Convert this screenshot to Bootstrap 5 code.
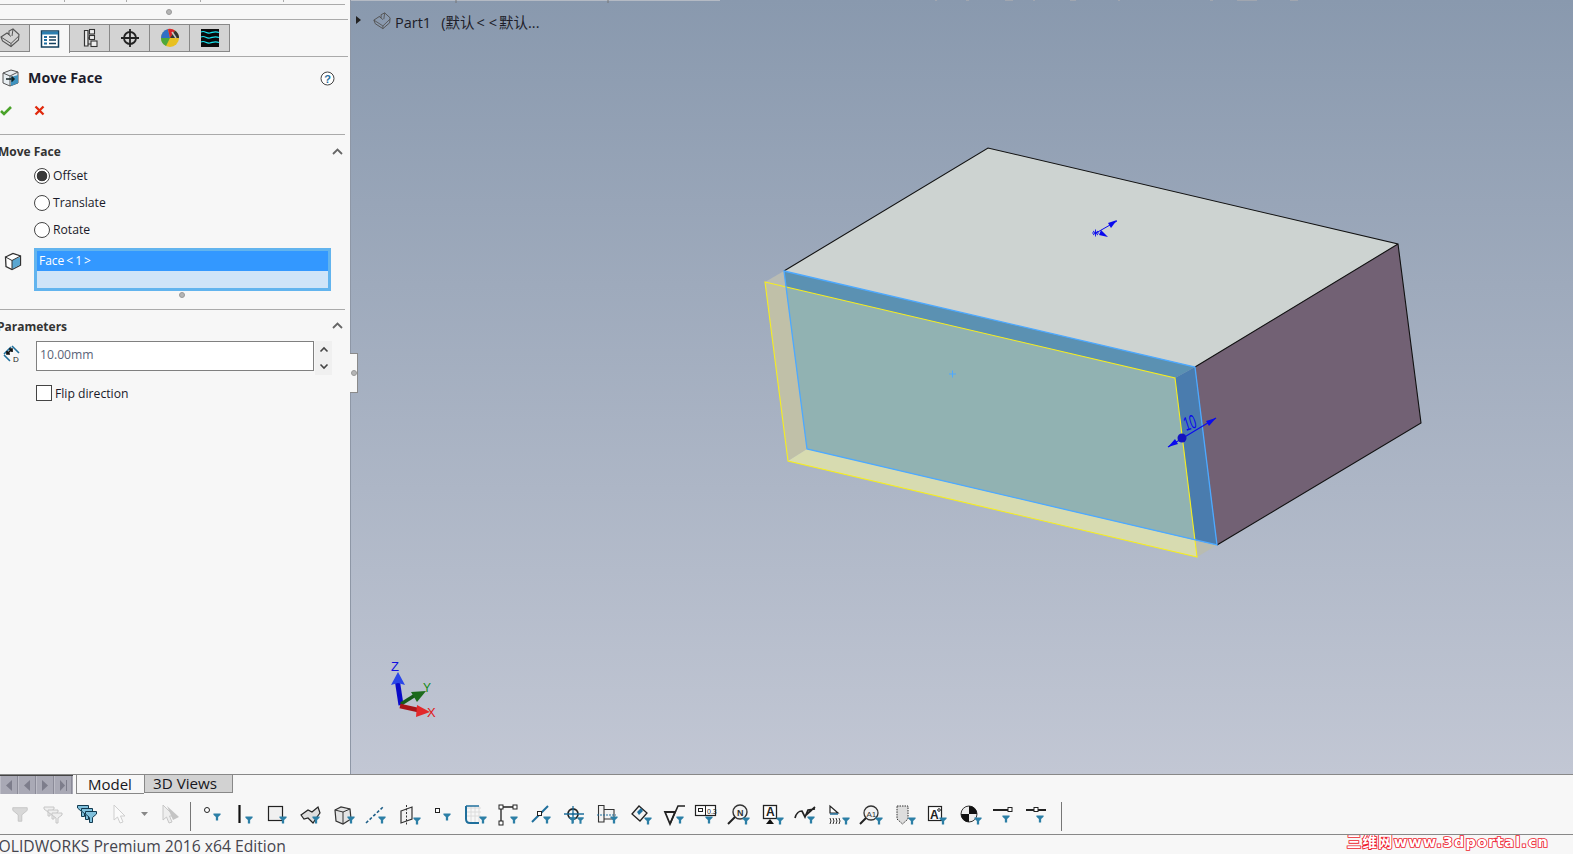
<!DOCTYPE html>
<html lang="en">
<head>
<meta charset="utf-8">
<title>SOLIDWORKS Move Face</title>
<link href="https://cdn.jsdelivr.net/npm/bootstrap@5.3.0/dist/css/bootstrap.min.css" rel="stylesheet">
<style>
html,body{height:854px;overflow:hidden}
body{font-family:"Open Sans","Noto Sans","Noto Sans CJK SC",sans-serif;color:#1a1a2a;background:#f7f7f7;font-size:12px}
.sw-main{height:774px}
.sw-panel{width:351px;flex:none;background:#f7f7f7;overflow:hidden;border-right:1px solid #8e97a6}
.sw-ticks{height:2px;margin-bottom:2px;background:linear-gradient(90deg,#f7f7f7 64px,#aaa 64px,#aaa 65px,#f7f7f7 65px,#f7f7f7 126px,#aaa 126px,#aaa 127px,#f7f7f7 127px,#f7f7f7 200px,#aaa 200px,#aaa 201px,#f7f7f7 201px,#f7f7f7 283px,#aaa 283px,#aaa 284px,#f7f7f7 284px)}
.sw-rule{height:1px;background:#aaa;width:345px;flex:none}
.sw-rule-wide{width:348px}
.sw-rule-low{margin-top:10px}
.sw-grip{width:6px;height:6px;border-radius:50%;background:#b5b5b5;border:1px solid #999;display:block}
.sw-griprow{height:14px;width:337px}
.sw-griprow-low{height:8px;width:364px}
.sw-tabs{height:36px;padding-top:4px}
.sw-tab{width:40px;height:28px;background:#d3d3d3;border:1px solid #888;border-left:0;display:flex;align-items:center;justify-content:center;padding:0}
.sw-tab-first{width:30px;justify-content:flex-start}
.sw-tab-on{background:#f7f7f7;height:29px;border-bottom:0}
.sw-title{font-size:14.2px;font-weight:700;color:#1c1c2c;height:42px;padding:0 15px 0 2px}
.sw-acts{height:35px;padding-bottom:12px}
.sw-x{margin-left:21px}
.sw-sect{font-size:12px;font-weight:700;color:#333;padding:2px 7px 0 0;margin-left:-1px;height:32px;overflow:hidden}
.sw-sect-params{height:31px;padding-top:2px}
.sw-chev{margin-top:-2px}
.sw-clip1{margin-left:-1px}
.sw-clip2{margin-left:-2px}
.sw-opt{height:27px;margin:0;padding:0 0 0 34px;min-height:0;display:flex;align-items:center}
.sw-opt-first{margin-top:-5px}
.sw-opt-last{margin-bottom:1px}
.sw-opt-flip{padding-left:36px;margin-top:10px;height:16px}
.sw-opt .form-check-input{float:none;margin:0;width:16px;height:16px;flex:none;background:#fff;border:1px solid #444;box-shadow:none;opacity:1}
.sw-opt .form-check-input[type=checkbox]{border-radius:0}
.sw-opt .form-check-input:checked{background:radial-gradient(circle,#3a3a3a 5px,#fff 5.6px);border-color:#444}
.sw-opt .form-check-label{padding:2px 0 0 3px;font-size:12.2px;opacity:1}
.sw-facerow{height:43px;margin-top:4px;padding-left:4px}
.sw-sel{height:43px;width:297px;margin-left:12px;border:3px solid #62b4ee;background:#cfe4f8;border-radius:0}
.sw-sel .list-group-item{background:#3398ff;color:#fff;border:0;border-radius:0;padding:0 2px;height:20px;font-size:12px;line-height:19px}
.sw-param{height:34px;padding-left:3px}
.sw-dimico{margin-top:4px;flex:none}
.sw-input{width:278px;height:30px;margin-left:15px;font-size:12.2px;padding:0 3px 3px;color:#5b6478;border:1px solid #808080;border-radius:0;background:#fff;box-shadow:none}
.sw-spin{width:17px;height:34px;background:#f0f0f0;margin-left:1px;flex:none}
.sw-handle{position:absolute;left:350px;top:353px;width:8px;height:40px;background:#f7f7f7;border:1px solid #8a8a8a;border-left:0;z-index:3;display:flex;align-items:center;justify-content:center}
.sw-view{flex:1;position:relative;background:linear-gradient(180deg,#8999ae 0%,#c2c7d4 100%);overflow:hidden}
.sw-view-svg{position:absolute;inset:0;width:100%;height:100%}
.sw-crumb{position:absolute;left:22px;top:12px;font-size:14.5px;color:#1d1d28;line-height:20px;white-space:nowrap}
.sw-crumb-ico{margin-right:4px;margin-bottom:4px}
.sw-crumb-tail{margin-left:10px;word-spacing:1px}
.sw-lt{margin:0 2px}
.sw-tabbar{height:20px;border-top:1px solid #888;background:#f7f7f7}
.sw-nav{width:73px;height:19px;background:#a9a9b5;border-top:1px solid #444;margin-right:3px;flex:none}
.sw-navb{width:18px;height:18px;display:flex;align-items:center;justify-content:center;border-right:1px solid #8b8b98;border-left:1px solid #bcbcc6}
.sw-mtab{font-size:15px;line-height:18px;color:#161620;padding:0 0 0 11px;width:68px;height:19px;background:#f7f7f7;border:1px solid #888;border-top:0;border-right:0}
.sw-vtab{font-size:15.2px;line-height:17px;color:#161620;width:89px;height:18px;background:#d2d2d2;border:1px solid #888;border-top:0;padding-left:8px}
.sw-tools{height:41px;border-bottom:1px solid #888;background:#f7f7f7;padding:4px 0 0 3px}
.sw-tb{width:33px;height:26px;flex:none;display:block}
.sw-tbc{width:19px;height:26px;flex:none;display:block}
.sw-sep{width:1px;height:29px;background:#777;margin:0 4px 0 3px;flex:none}
.sw-sep-end{margin-left:8px}
.sw-status{height:19px;background:#f7f7f7;font-size:15.7px;line-height:19px;color:#45454e;white-space:nowrap;overflow:hidden}
.sw-statext{margin-left:-10px;padding-top:2px}
.sw-mark{margin-right:24px;font-family:"DejaVu Sans","Noto Sans CJK SC",sans-serif;font-weight:700;font-size:14.5px;line-height:15px;color:#fff;-webkit-text-stroke:1.7px #ee1b2d;paint-order:stroke fill;letter-spacing:1.100px}
</style>
</head>
<body class="d-flex flex-column m-0">
<svg width="0" height="0" class="position-absolute">
<defs>
<symbol id="fn" viewBox="-2 -1 14 12"><path d="M0 0H10V2L6.600 5V10H3.400V5L0 2Z" fill="#2c7fa6"/></symbol>
<symbol id="gf" viewBox="0 0 20 20"><path d="M2 3H18V6L12 11V18H8V11L2 6Z" fill="#d8d8d8" stroke="#c4c4c4"/></symbol>
<symbol id="bf" viewBox="0 0 12 12"><path d="M.5.5H11.500V3L7.500 6.500V11.500H4.500V6.500L.5 3Z" fill="#7fc0dc" stroke="#123a50"/></symbol>
<symbol id="part" viewBox="0 0 20 20"><path d="M1 9 7 5l2 1.500V3L13 1l6 5.500-.500 5.500L11 18.500 2.500 13Z" fill="none" stroke="#555" stroke-width="1.100"/><path d="M1 9 11 15.500 18.800 8M11 15.500V18.500M7 5l4 3.500M13 1l-1 7" fill="none" stroke="#555"/></symbol>
</defs>
</svg>

<div class="d-flex sw-main">
  <aside class="sw-panel d-flex flex-column flex-shrink-0">
    <div class="sw-ticks"></div>
    <div class="sw-rule"></div>
    <div class="sw-griprow d-flex justify-content-center align-items-center"><span class="sw-grip"></span></div>
    <div class="sw-rule sw-rule-wide"></div>

    <div class="sw-tabs d-flex">
      <button class="sw-tab sw-tab-first" type="button" aria-label="Feature tree"><svg width="20" height="20"><use href="#part" width="20" height="20"/></svg></button>
      <button class="sw-tab sw-tab-on" type="button" aria-label="Property manager"><svg width="20" height="20" viewBox="0 0 20 20"><rect x="1.500" y="2" width="17" height="16" fill="#fff" stroke="#123f5e" stroke-width="1.500"/><rect x="2" y="2.500" width="16" height="3" fill="#2a7eb0"/><path d="M4 8h3M4 11h3M4 14.500h3" stroke="#1d6ea2" stroke-width="2"/><path d="M9 8h7M9 11h7M9 14.500h7" stroke="#123f5e" stroke-width="1.500"/></svg></button>
      <button class="sw-tab" type="button" aria-label="Configuration manager"><svg width="20" height="20" viewBox="0 0 20 20"><path d="M4.500 2.500H8V18H4.500Z" fill="#eee" stroke="#333" stroke-width="1.200"/><path d="M8 10H11M8 16H11" stroke="#333"/><rect x="9.500" y="1.500" width="5" height="4.500" fill="#eee" stroke="#333" stroke-width="1.100"/><rect x="9.500" y="7.500" width="5" height="4" fill="#eee" stroke="#333" stroke-width="1.100"/><rect x="11" y="13" width="6" height="5.500" fill="#eee" stroke="#333" stroke-width="1.100"/></svg></button>
      <button class="sw-tab" type="button" aria-label="DimXpert"><svg width="20" height="20" viewBox="0 0 20 20"><circle cx="10" cy="10" r="6" fill="none" stroke="#222" stroke-width="1.800"/><path d="M10 1V19M1 10H19" stroke="#222" stroke-width="1.800"/></svg></button>
      <button class="sw-tab" type="button" aria-label="Display manager"><svg width="20" height="20" viewBox="0 0 20 20"><circle cx="10" cy="10" r="9" fill="#e8c020"/><path d="M10 10 1 10A9 9 0 0 1 8 1Z" fill="#2f6fc6"/><path d="M10 10 8 1A9 9 0 0 1 15 2.500Z" fill="#d8242c"/><path d="M10 10 15 2.500A9 9 0 0 1 19 10Z" fill="#333"/><path d="M10 10 1 10A9 9 0 0 0 6 18Z" fill="#4ea83a"/><path d="M12 4l4 6" stroke="#c9c9c9" stroke-width="1.500"/></svg></button>
      <button class="sw-tab" type="button" aria-label="Motion manager"><svg width="20" height="20" viewBox="0 0 20 20"><rect x="1" y="1" width="18" height="18" fill="#0b0b0b"/><path d="M1 4c4-2 5 2 9 1s5-2 9-.5M1 9c4-2 5 2 9 1s5-2 9-.5M1 14c4-2 5 2 9 1s5-2 9-.5" fill="none" stroke="#19e5f0" stroke-width="1.100"/></svg></button>
    </div>
    <div class="sw-rule sw-rule-wide"></div>

    <div class="sw-title d-flex align-items-center justify-content-between">
      <div class="d-flex align-items-center gap-2">
        <svg width="18" height="18" viewBox="0 0 18 18"><path d="M1 4 9 1l7 2v11l-8 3-7-3Z" fill="#e8eef2" stroke="#555"/><path d="M1 4l7 3 8-4M8 7v10" fill="none" stroke="#555"/><path d="M9 8l7-2v8l-7 3Z" fill="#3f93c0"/><path d="M4 10h8M9.500 7.500 12 10l-2.500 2.500" fill="none" stroke="#122" stroke-width="1.500"/></svg>
        <span>Move Face</span>
      </div>
      <svg width="15" height="15" viewBox="0 0 15 15"><circle cx="7.500" cy="7.500" r="6.500" fill="#fff" stroke="#444"/><text x="7.500" y="11.500" text-anchor="middle" font-family="Liberation Sans" font-size="11" font-weight="700" fill="#2a6f9e">?</text></svg>
    </div>
    <div class="sw-acts d-flex align-items-center">
      <svg width="13" height="12" viewBox="0 0 13 12" class="flex-shrink-0"><path d="M1 6l3 3 7-7" fill="none" stroke="#4aa32a" stroke-width="2.600"/></svg>
      <svg width="11" height="11" viewBox="0 0 11 11" class="sw-x"><path d="M1.500 1.500l8 8M9.500 1.500l-8 8" stroke="#e0280c" stroke-width="2.300"/></svg>
    </div>
    <div class="sw-rule"></div>

    <div class="sw-sect d-flex align-items-center justify-content-between">
      <span class="sw-clip1">Move Face</span>
      <svg width="11" height="7" viewBox="0 0 11 7" class="sw-chev"><path d="M1 6 5.500 1.500 10 6" fill="none" stroke="#666" stroke-width="1.800"/></svg>
    </div>
    <div class="form-check sw-opt sw-opt-first"><input class="form-check-input" type="radio" name="mv" id="r1" checked><label class="form-check-label" for="r1">Offset</label></div>
    <div class="form-check sw-opt"><input class="form-check-input" type="radio" name="mv" id="r2"><label class="form-check-label" for="r2">Translate</label></div>
    <div class="form-check sw-opt sw-opt-last"><input class="form-check-input" type="radio" name="mv" id="r3"><label class="form-check-label" for="r3">Rotate</label></div>
    <div class="sw-facerow d-flex align-items-start">
      <svg width="18" height="20" viewBox="0 0 18 20" class="mt-1"><path d="M1.500 5 9 1.500 16.500 4V13L8 17.500 2 14.500Z" fill="#fff" stroke="#333" stroke-width="1.300"/><path d="M8 8.500 16 5V13L8 17Z" fill="#5aa7d2"/><path d="M1.500 5 8 8.500 16.500 4M8 8.500V17" fill="none" stroke="#333"/></svg>
      <div class="list-group sw-sel"><div class="list-group-item">Face&thinsp;&lt;&thinsp;1&thinsp;&gt;</div></div>
    </div>
    <div class="sw-griprow-low d-flex justify-content-center align-items-center"><span class="sw-grip"></span></div>
    <div class="sw-rule sw-rule-low"></div>
    <div class="sw-sect sw-sect-params d-flex align-items-center justify-content-between">
      <span class="sw-clip2">Parameters</span>
      <svg width="11" height="7" viewBox="0 0 11 7" class="sw-chev"><path d="M1 6 5.500 1.500 10 6" fill="none" stroke="#666" stroke-width="1.800"/></svg>
    </div>
    <div class="sw-param d-flex align-items-start">
      <svg width="18" height="18" viewBox="0 0 18 18" class="sw-dimico"><path d="M1 9 8 2M9 1l7 7M1 10l6 6" stroke="#1f6f9c" stroke-width="1.600" fill="none"/><path d="M4 9 9 4M4 6v3h3M6 4h3v3" stroke="#111" stroke-width="1.700" fill="none"/><text x="10" y="17" font-family="Liberation Sans" font-size="8" fill="#222">D</text></svg>
      <input class="form-control sw-input" type="text" value="10.00mm" aria-label="Offset distance">
      <div class="sw-spin d-flex flex-column align-items-center justify-content-around">
        <svg width="10" height="7" viewBox="0 0 10 7"><path d="M1.500 5.500 5 2l3.500 3.500" fill="none" stroke="#444" stroke-width="1.600"/></svg>
        <svg width="10" height="7" viewBox="0 0 10 7"><path d="M1.500 1.500 5 5l3.500-3.500" fill="none" stroke="#444" stroke-width="1.600"/></svg>
      </div>
    </div>
    <div class="form-check sw-opt sw-opt-flip"><input class="form-check-input" type="checkbox" id="c1"><label class="form-check-label" for="c1">Flip direction</label></div>
  </aside>
  <div class="sw-handle"><span class="sw-grip"></span></div>

  <main class="sw-view">
    <svg class="sw-view-svg" viewBox="351 0 1222 774" preserveAspectRatio="none">
      <path d="M351 .5H720" stroke="#b4bac4"/>
      <path d="M456 0V3M608 0V3" stroke="#777"/>
      <path d="M935 .5h2M966 .5h3M1005 .5h8M1033 .5h2M1070 .5h6M1118 .5h2M1210 .5h3M1237 .5h20M1290 .5h8" stroke="#a0a6b0"/>
      <!-- ghost offset face -->
      <polygon points="765,282 784,271 786,287" fill="#b9bcb4"/>
      <polygon points="765,282 786,287 807,449 788,461" fill="#c0c0a8"/>
      <polygon points="788,461 807,449 1195,540 1197,557" fill="#d7dbb0"/>
      <polygon points="1197,557 1195,540 1217,545" fill="#b9bcb0"/>
      <!-- solid -->
      <polygon points="988,148 1398,244 1195,367 784,271" fill="#cdd3d1"/>
      <polygon points="1195,367 1398,244 1421,423 1217,545" fill="#726174"/>
      <polygon points="786,287 1175,378 1195,540 807,449" fill="#91b2b2"/>
      <polygon points="784,271 1195,367 1175,378 786,287" fill="#5b91b2"/>
      <polygon points="1195,367 1217,545 1195,540 1175,378" fill="#4a7cae"/>
      <path d="M784 271 988 148 1398 244 1421 423 1217 545M1195 367 1398 244" fill="none" stroke="#111" stroke-width="1.100"/>
      <path d="M765 282 1175 378 1197 557 788 461Z" fill="none" stroke="#f6ee20" stroke-width="1.100"/>
      <path d="M784 271 1195 367 1217 545 807 449Z" fill="none" stroke="#4da9ff" stroke-width="1.300"/>
      <path d="M949 374h7M952.500 370.500v7" stroke="#4da9ff"/>
      <!-- handles -->
      <path d="M1096 233 1117 221" stroke="#0a0aee"/>
      <path d="M1117 220 1108 223 1111 228Z" fill="#0a0aee"/>
      <path d="M1108 237 1099 235 1101 230Z" fill="#0a0aee"/>
      <path d="M1092 233h7M1095.500 229.500v7M1093 231l5 4M1098 231l-5 4" stroke="#0a0aee" stroke-width=".9"/>
      <path d="M1168 447 1216 418" stroke="#0a0aee" stroke-width="1.100"/>
      <path d="M1216 418 1206 421 1209 426Z M1168 447 1178 444 1175 439Z" fill="#0a0aee"/>
      <circle cx="1182" cy="438" r="4.500" fill="#1414c0"/>
      <text transform="translate(1186 431) rotate(-18) scale(.85 1.500)" font-family="Liberation Sans" font-size="13" fill="#0a0aee">10</text>
      <!-- triad -->
      <path d="M401 705 397.500 682" stroke="#0a0ac8" stroke-width="5"/>
      <path d="M398 672 391 685 398 683 405 685Z" fill="#2a46e8"/>
      <path d="M401 704 417 694" stroke="#175c1a" stroke-width="3.500"/>
      <path d="M426 691 411 692 417 702Z" fill="#1c6b1c"/>
      <path d="M400 706 418 710" stroke="#a81418" stroke-width="4.500"/>
      <path d="M430 712 417 705 416 717Z" fill="#e2282a"/>
      <text x="391" y="671" font-family="Liberation Sans" font-size="13" fill="#1010e0">Z</text>
      <text x="423" y="692" font-family="Liberation Sans" font-size="12" fill="#138a13">Y</text>
      <text x="427" y="717" font-family="Liberation Sans" font-size="13" fill="#e01818">X</text>
      <!-- tree arrow -->
      <path d="M356 16 361 20 356 24Z" fill="#222"/>
    </svg>
    <div class="sw-crumb d-flex align-items-center">
      <svg width="18" height="18" class="sw-crumb-ico"><use href="#part" width="18" height="18"/></svg>
      <span>Part1<span class="sw-crumb-tail">(默认<span class="sw-lt">&lt;</span><span class="sw-lt">&lt;</span>默认...</span></span>
    </div>
  </main>
</div>

<div class="sw-tabbar d-flex flex-shrink-0">
  <div class="sw-nav d-flex">
    <span class="sw-navb"><svg width="8" height="11" viewBox="0 0 8 11"><path d="M7 0 1 5.500 7 11Z" fill="#7d7d8b"/></svg></span>
    <span class="sw-navb"><svg width="8" height="11" viewBox="0 0 8 11"><path d="M7 0 1 5.500 7 11Z" fill="#7d7d8b"/></svg></span>
    <span class="sw-navb"><svg width="8" height="11" viewBox="0 0 8 11"><path d="M1 0 7 5.500 1 11Z" fill="#7d7d8b"/></svg></span>
    <span class="sw-navb"><svg width="9" height="11" viewBox="0 0 9 11"><path d="M1 0 6 5.500 1 11Z" fill="#7d7d8b"/><path d="M7.500 0V11" stroke="#7d7d8b"/></svg></span>
  </div>
  <div class="sw-mtab">Model</div>
  <div class="sw-vtab">3D Views</div>
</div>

<div class="sw-tools d-flex align-items-center flex-shrink-0">
  <svg class="sw-tb" viewBox="0 0 33 26"><use href="#gf" x="8" y="2" width="18" height="18"/></svg>
  <svg class="sw-tb" viewBox="0 0 33 26"><g fill="#eee" stroke="#c6c6c6"><path d="M8 4H18V6L14 9V13H12V9L8 6Z"/><path d="M12 7H22V9L18 12V16H16V12L12 9Z"/><path d="M16 10H26V12L22 15V20H20V15L16 12Z"/></g></svg>
  <svg class="sw-tb" viewBox="0 0 33 26"><use href="#bf" x="8" y="2" width="12" height="12"/><use href="#bf" x="12" y="5" width="12" height="12"/><use href="#bf" x="16" y="8" width="12" height="12"/></svg>
  <svg class="sw-tb" viewBox="0 0 33 26"><path d="M12 2V17L15.500 14 18 20 21 19 18.500 13H23Z" fill="#fbfbfb" stroke="#cfcfcf"/></svg>
  <svg class="sw-tbc" viewBox="0 0 19 26"><path d="M6 9H13L9.500 13Z" fill="#888"/></svg>
  <svg class="sw-tb" viewBox="0 0 33 26"><path d="M9 2V17L12.500 14 15 20 18 19 15.500 13H20Z" fill="#eee" stroke="#c6c6c6"/><path d="M13 3 25 14 19 17Z" fill="#c4c4c4"/></svg>
  <span class="sw-sep"></span>

  <svg class="sw-tb" viewBox="0 0 33 26"><circle cx="12" cy="7" r="2.500" fill="#fff" stroke="#222"/><use href="#fn" x="17" y="9" width="10" height="10"/></svg>
  <svg class="sw-tb" viewBox="0 0 33 26"><path d="M11.500 2V20" stroke="#111" stroke-width="2.200"/><use href="#fn" x="16" y="12" width="10" height="10"/></svg>
  <svg class="sw-tb" viewBox="0 0 33 26"><rect x="7.500" y="3.500" width="14" height="14" fill="#f0f0f0" stroke="#222" stroke-width="1.200"/><use href="#fn" x="17" y="12" width="10" height="10"/></svg>
  <svg class="sw-tb" viewBox="0 0 33 26"><path d="M7 12 14 7 18 9 24 4 26 10 23 14 19 20 14 15 10 16Z" fill="#ddd" stroke="#222" stroke-width="1.200"/><use href="#fn" x="17" y="12" width="10" height="10"/></svg>
  <svg class="sw-tb" viewBox="0 0 33 26"><path d="M8 7 14 4 23 6 24 16 16 21 9 18Z" fill="#e4e4e4" stroke="#333" stroke-width="1.200"/><path d="M8 7 16 9 23 6M16 9V21" fill="none" stroke="#333"/><use href="#fn" x="19" y="12" width="10" height="10"/></svg>
  <svg class="sw-tb" viewBox="0 0 33 26"><path d="M6 20 23 4" stroke="#1f5f88" stroke-width="1.600" stroke-dasharray="3 2"/><use href="#fn" x="17" y="12" width="10" height="10"/></svg>
  <svg class="sw-tb" viewBox="0 0 33 26"><path d="M8 8 19 4V16L8 20Z" fill="#f2f2f2" stroke="#333" stroke-width="1.200"/><path d="M13.500 2V22" stroke="#333" stroke-dasharray="2 1.500"/><use href="#fn" x="19" y="13" width="10" height="10"/></svg>
  <svg class="sw-tb" viewBox="0 0 33 26"><rect x="9.500" y="5.500" width="4" height="4" fill="#fff" stroke="#222"/><use href="#fn" x="16" y="9" width="10" height="10"/></svg>
  <svg class="sw-tb" viewBox="0 0 33 26"><path d="M8 5H22M8 9H22M8 13H22M12 3V19M16 3V19M20 3V19" stroke="#dcdcdc"/><path d="M7 3V16Q7 20 11 20H20" fill="none" stroke="#1f6f9c" stroke-width="2"/><path d="M7 3H20" stroke="#1f6f9c" stroke-width="1.500"/><use href="#fn" x="19" y="12" width="10" height="10"/></svg>
  <svg class="sw-tb" viewBox="0 0 33 26"><path d="M9 5V19M10 4H23" stroke="#222" stroke-width="1.300"/><rect x="7" y="2" width="4" height="4" fill="#fff" stroke="#222"/><rect x="7" y="18" width="4" height="4" fill="#fff" stroke="#222"/><rect x="21" y="2" width="4" height="4" fill="#fff" stroke="#222"/><use href="#fn" x="17" y="12" width="10" height="10"/></svg>
  <svg class="sw-tb" viewBox="0 0 33 26"><path d="M7 19 23 3" stroke="#1f6f9c" stroke-width="2"/><rect x="12.500" y="8.500" width="4" height="4" fill="#fff" stroke="#222"/><use href="#fn" x="17" y="12" width="10" height="10"/></svg>
  <svg class="sw-tb" viewBox="0 0 33 26"><circle cx="15" cy="11" r="5" fill="none" stroke="#222" stroke-width="1.800"/><circle cx="15" cy="11" r="1.300" fill="#1f6f9c"/><path d="M15 3V20M6 11H26" stroke="#1f6f9c" stroke-width="1.300"/><use href="#fn" x="10" y="13" width="9" height="9"/><use href="#fn" x="18" y="13" width="9" height="9"/></svg>
  <svg class="sw-tb" viewBox="0 0 33 26"><path d="M7.500 2.500H13V19H7.500ZM13 6.500H23V16H13Z" fill="#f2f2f2" stroke="#333" stroke-width="1.100"/><path d="M6 12H25" stroke="#1f6f9c" stroke-dasharray="2 1"/><use href="#fn" x="18" y="12" width="10" height="10"/></svg>
  <svg class="sw-tb" viewBox="0 0 33 26"><path d="M8 11 15 3 23 10 16 18Z" fill="#f2f2f2" stroke="#222" stroke-width="1.300"/><path d="M13 9 17 5l2 3-4 4Z" fill="#1f6f9c"/><use href="#fn" x="19" y="13" width="10" height="10"/></svg>
  <svg class="sw-tb" viewBox="0 0 33 26"><path d="M8 9H18L13 21Z" fill="none" stroke="#222" stroke-width="1.800"/><path d="M13 21 21 3H28" fill="none" stroke="#222" stroke-width="1.600"/><use href="#fn" x="18" y="12" width="10" height="10"/></svg>
  <svg class="sw-tb" viewBox="0 0 33 26"><rect x="5.500" y="2.500" width="20" height="10" fill="#fff" stroke="#222" stroke-width="1.200"/><path d="M15.500 2.500V12.500" stroke="#222"/><rect x="8.500" y="5.500" width="4" height="3" fill="none" stroke="#222"/><text x="17" y="10.500" font-family="Liberation Sans" font-size="7" fill="#222">0.3</text><use href="#fn" x="14" y="12" width="10" height="10"/></svg>
  <svg class="sw-tb" viewBox="0 0 33 26"><circle cx="17" cy="9" r="7" fill="#f2f2f2" stroke="#333" stroke-width="1.400"/><path d="M12 14 5 21" stroke="#222" stroke-width="2"/><text x="14" y="12.500" font-family="Liberation Sans" font-size="9" font-weight="700" fill="#333">N</text><use href="#fn" x="18" y="13" width="10" height="10"/></svg>
  <svg class="sw-tb" viewBox="0 0 33 26"><rect x="7.500" y="2.500" width="13" height="13" fill="#fff" stroke="#222" stroke-width="1.300"/><text x="10" y="13" font-family="Liberation Sans" font-size="12" font-weight="700" fill="#222">A</text><path d="M14 16 10 21H18Z" fill="#111"/><use href="#fn" x="19" y="13" width="10" height="10"/></svg>
  <svg class="sw-tb" viewBox="0 0 33 26"><path d="M6 15C8 8 11 8 13 8L16 14 19 7 26 6M17 12 26 4" fill="none" stroke="#222" stroke-width="1.700"/><use href="#fn" x="17" y="12" width="10" height="10"/></svg>
  <svg class="sw-tb" viewBox="0 0 33 26"><path d="M8 3V10H16Z" fill="#fff" stroke="#222" stroke-width="1.200"/><path d="M8 11H16" stroke="#1f6f9c" stroke-width="1.500"/><path d="M8 15q2 3 0 6M11 15q2 3 0 6M14 15q2 3 0 6M17 15q2 3 0 6" fill="none" stroke="#333"/><use href="#fn" x="19" y="13" width="10" height="10"/></svg>
  <svg class="sw-tb" viewBox="0 0 33 26"><circle cx="16" cy="10" r="7" fill="#f2f2f2" stroke="#333" stroke-width="1.300"/><path d="M11 15 5 21" stroke="#222" stroke-width="2"/><text x="11.500" y="14" font-family="Liberation Sans" font-size="8" fill="#333">A1</text><use href="#fn" x="19" y="13" width="10" height="10"/></svg>
  <svg class="sw-tb" viewBox="0 0 33 26"><path d="M9 3H20V16L14.500 21 9 16Z" fill="#ddd" stroke="#333" stroke-dasharray="1.500 1"/><use href="#fn" x="19" y="13" width="10" height="10"/></svg>
  <svg class="sw-tb" viewBox="0 0 33 26"><rect x="7.500" y="3.500" width="13" height="14" fill="#fff" stroke="#222" stroke-width="1.200"/><text x="9" y="16" font-family="Liberation Sans" font-size="12" font-weight="700" fill="#222">A</text><circle cx="18" cy="7" r="1.300" fill="none" stroke="#222"/><use href="#fn" x="17" y="13" width="10" height="10"/></svg>
  <svg class="sw-tb" viewBox="0 0 33 26"><circle cx="15" cy="11" r="8" fill="#ededed" stroke="#333"/><path d="M15 11V3A8 8 0 0 1 23 11ZM15 11V19A8 8 0 0 1 7 11Z" fill="#111"/><use href="#fn" x="19" y="13" width="10" height="10"/></svg>
  <svg class="sw-tb" viewBox="0 0 33 26"><path d="M6 7H22" stroke="#222" stroke-width="2"/><rect x="21" y="4.500" width="4" height="4" fill="#fff" stroke="#222"/><use href="#fn" x="14" y="11" width="10" height="10"/></svg>
  <svg class="sw-tb" viewBox="0 0 33 26"><path d="M6 7H26" stroke="#222" stroke-width="2"/><rect x="14" y="4.500" width="4" height="4" fill="#fff" stroke="#222"/><use href="#fn" x="15" y="11" width="10" height="10"/></svg>
  <span class="sw-sep sw-sep-end"></span>
</div>

<footer class="sw-status d-flex justify-content-between flex-shrink-0">
  <span class="sw-statext">SOLIDWORKS Premium 2016 x64 Edition</span>
  <span class="sw-mark">三维网www.3dportal.cn</span>
</footer>
<script src="https://cdn.jsdelivr.net/npm/bootstrap@5.3.0/dist/js/bootstrap.bundle.min.js"></script>
</body>
</html>
